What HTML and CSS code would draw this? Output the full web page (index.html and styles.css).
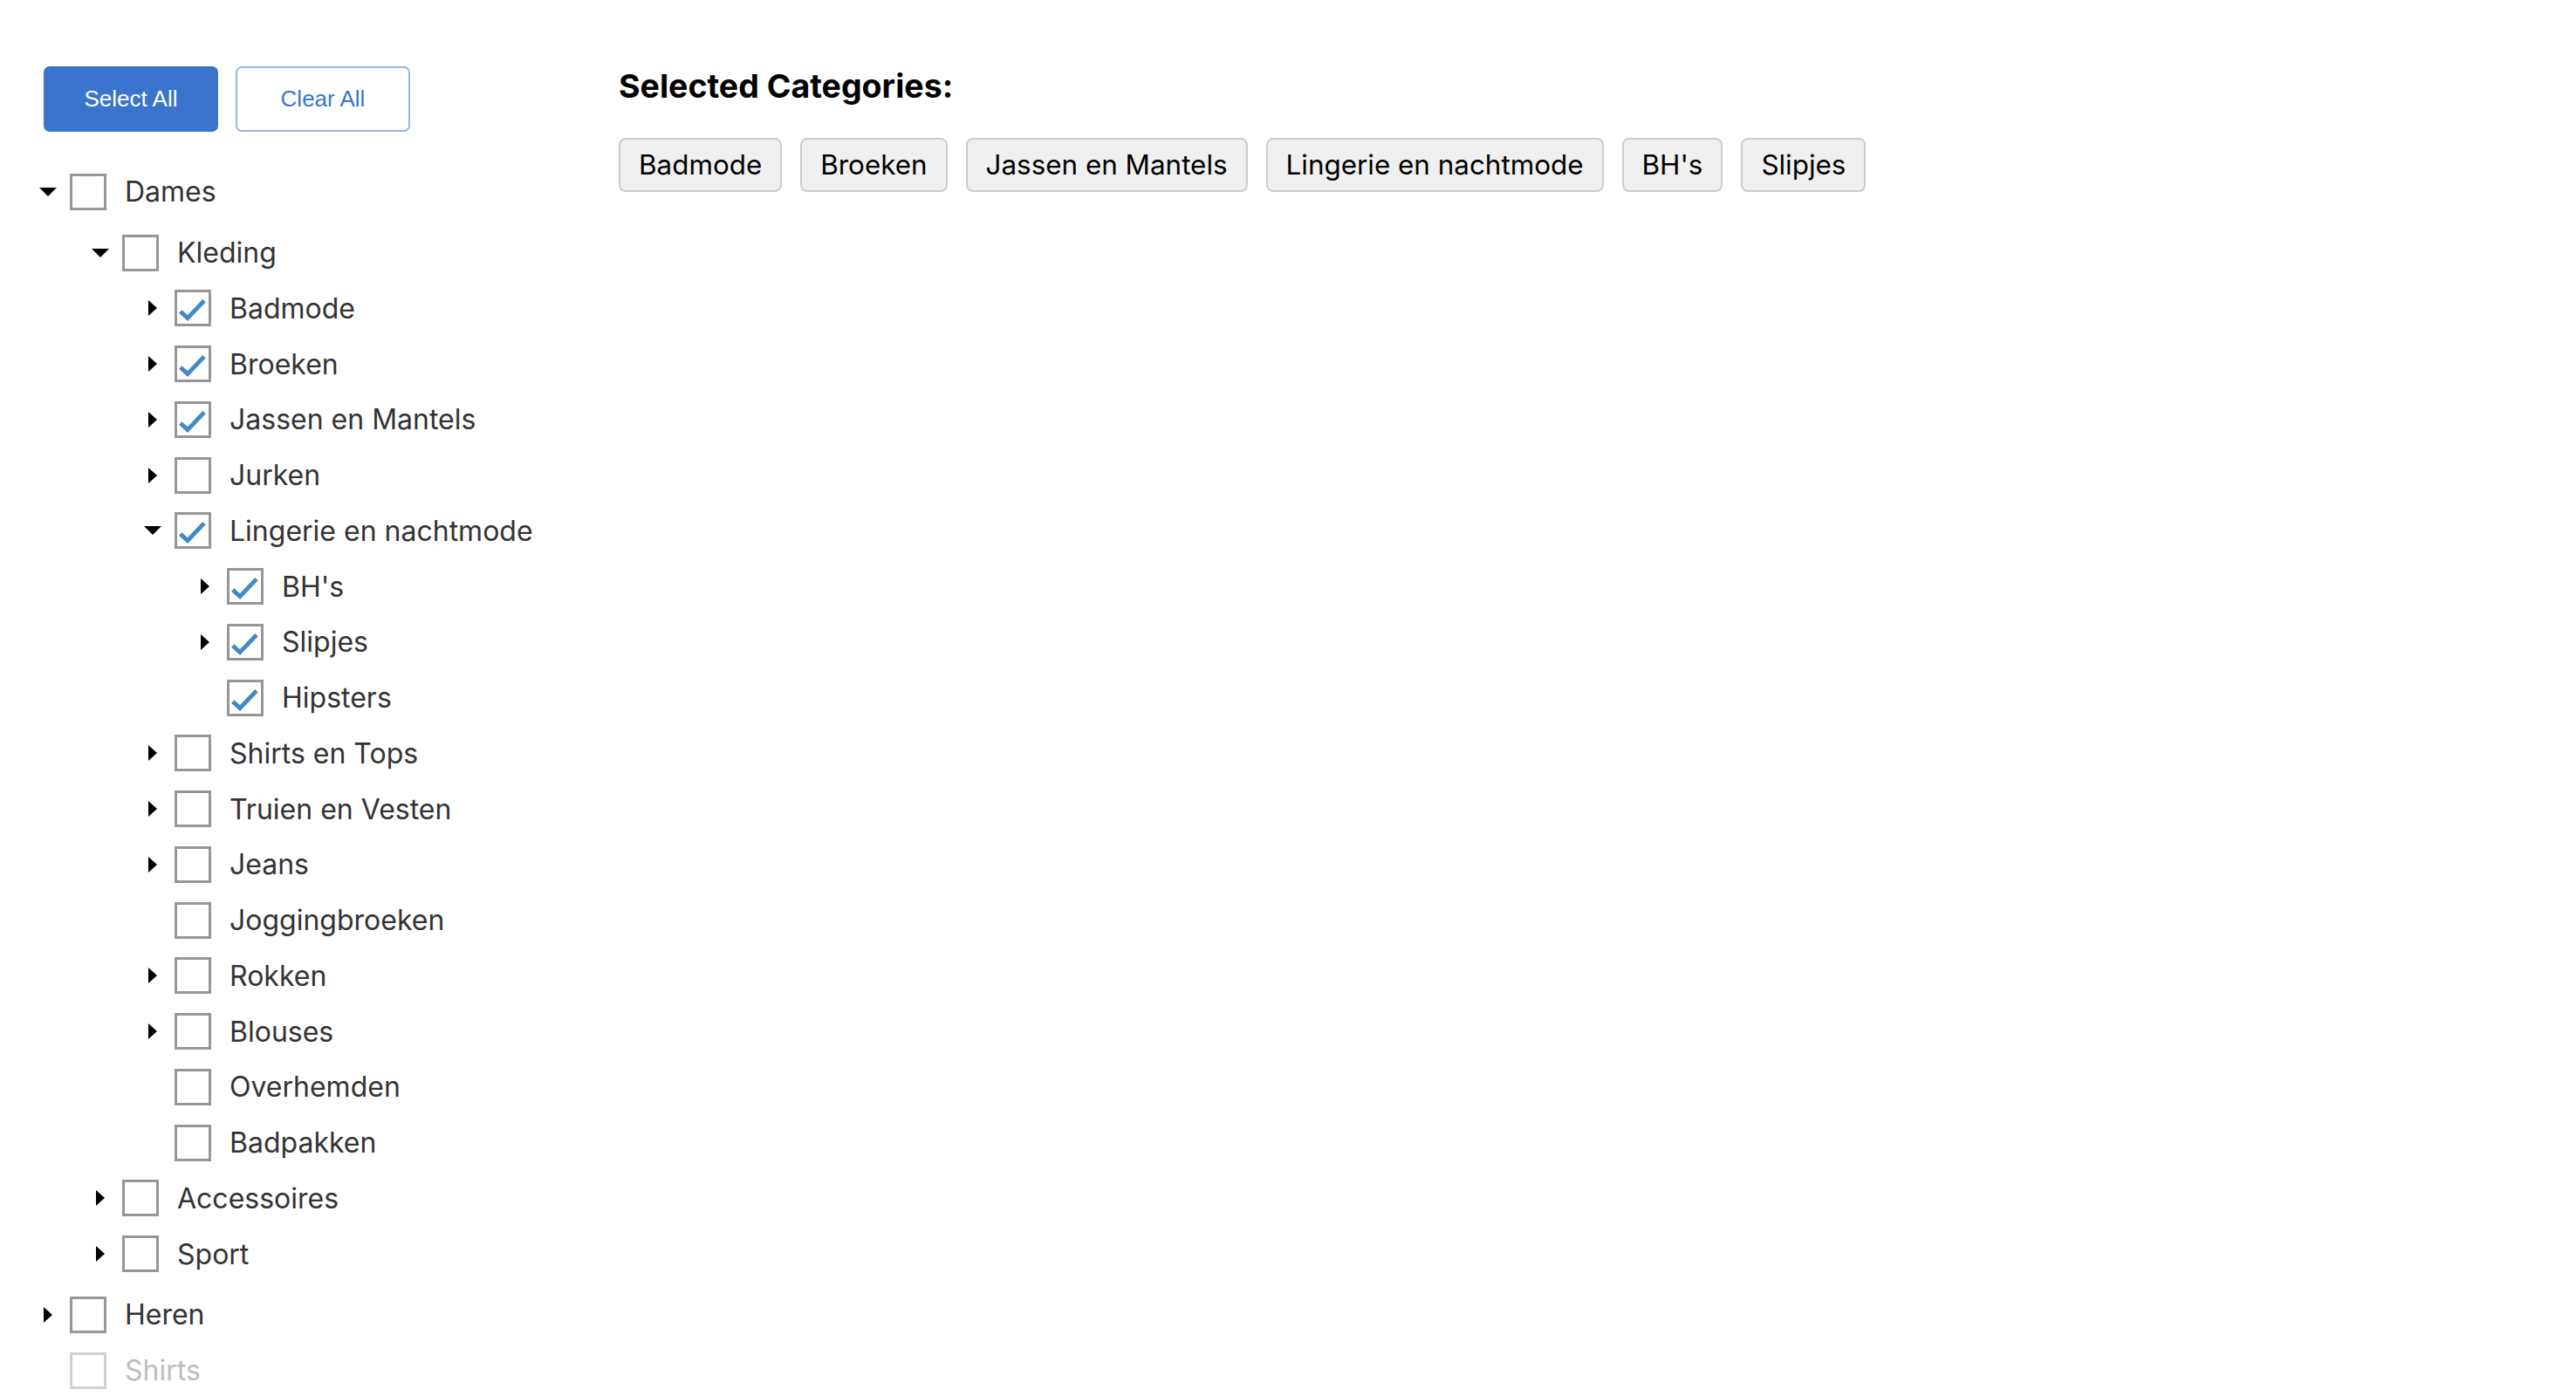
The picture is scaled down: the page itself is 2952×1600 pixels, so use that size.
FILE: index.html
```html
<!DOCTYPE html>
<html lang="nl">
<head>
<meta charset="utf-8">
<title>Categorieën</title>
<link rel="stylesheet" href="styles.css">
</head>
<body>
<div class="page">
  <div class="left">
    <div class="actions">
      <button class="btn btn-primary">Select All</button>
      <button class="btn btn-outline">Clear All</button>
    </div>
    <ul class="tree">
      <li>
        <div class="row"><span class="caret down"><svg width="20" height="10" viewBox="0 0 20 10"><polygon points="0,0 20,0 10,10"/></svg></span><span class="box"></span><span class="label">Dames</span></div>
        <ul class="sub sub-first">
          <li>
            <div class="row"><span class="caret down"><svg width="20" height="10" viewBox="0 0 20 10"><polygon points="0,0 20,0 10,10"/></svg></span><span class="box"></span><span class="label">Kleding</span></div>
            <ul class="sub">
              <li><div class="row"><span class="caret"><svg width="10" height="18" viewBox="0 0 10 18"><polygon points="0,0 10,9 0,18"/></svg></span><span class="box checked"><svg viewBox="0 0 36 36" width="36" height="36"><polyline points="3.7,22 12,29.6 31,9.6"/></svg></span><span class="label">Badmode</span></div></li>
              <li><div class="row"><span class="caret"><svg width="10" height="18" viewBox="0 0 10 18"><polygon points="0,0 10,9 0,18"/></svg></span><span class="box checked"><svg viewBox="0 0 36 36" width="36" height="36"><polyline points="3.7,22 12,29.6 31,9.6"/></svg></span><span class="label">Broeken</span></div></li>
              <li><div class="row"><span class="caret"><svg width="10" height="18" viewBox="0 0 10 18"><polygon points="0,0 10,9 0,18"/></svg></span><span class="box checked"><svg viewBox="0 0 36 36" width="36" height="36"><polyline points="3.7,22 12,29.6 31,9.6"/></svg></span><span class="label">Jassen en Mantels</span></div></li>
              <li><div class="row"><span class="caret"><svg width="10" height="18" viewBox="0 0 10 18"><polygon points="0,0 10,9 0,18"/></svg></span><span class="box"></span><span class="label">Jurken</span></div></li>
              <li>
                <div class="row"><span class="caret down"><svg width="20" height="10" viewBox="0 0 20 10"><polygon points="0,0 20,0 10,10"/></svg></span><span class="box checked"><svg viewBox="0 0 36 36" width="36" height="36"><polyline points="3.7,22 12,29.6 31,9.6"/></svg></span><span class="label">Lingerie en nachtmode</span></div>
                <ul class="sub">
                  <li><div class="row"><span class="caret"><svg width="10" height="18" viewBox="0 0 10 18"><polygon points="0,0 10,9 0,18"/></svg></span><span class="box checked"><svg viewBox="0 0 36 36" width="36" height="36"><polyline points="3.7,22 12,29.6 31,9.6"/></svg></span><span class="label">BH's</span></div></li>
                  <li><div class="row"><span class="caret"><svg width="10" height="18" viewBox="0 0 10 18"><polygon points="0,0 10,9 0,18"/></svg></span><span class="box checked"><svg viewBox="0 0 36 36" width="36" height="36"><polyline points="3.7,22 12,29.6 31,9.6"/></svg></span><span class="label">Slipjes</span></div></li>
                  <li><div class="row"><span class="caret"></span><span class="box checked"><svg viewBox="0 0 36 36" width="36" height="36"><polyline points="3.7,22 12,29.6 31,9.6"/></svg></span><span class="label">Hipsters</span></div></li>
                </ul>
              </li>
              <li><div class="row"><span class="caret"><svg width="10" height="18" viewBox="0 0 10 18"><polygon points="0,0 10,9 0,18"/></svg></span><span class="box"></span><span class="label">Shirts en Tops</span></div></li>
              <li><div class="row"><span class="caret"><svg width="10" height="18" viewBox="0 0 10 18"><polygon points="0,0 10,9 0,18"/></svg></span><span class="box"></span><span class="label">Truien en Vesten</span></div></li>
              <li><div class="row"><span class="caret"><svg width="10" height="18" viewBox="0 0 10 18"><polygon points="0,0 10,9 0,18"/></svg></span><span class="box"></span><span class="label">Jeans</span></div></li>
              <li><div class="row"><span class="caret"></span><span class="box"></span><span class="label">Joggingbroeken</span></div></li>
              <li><div class="row"><span class="caret"><svg width="10" height="18" viewBox="0 0 10 18"><polygon points="0,0 10,9 0,18"/></svg></span><span class="box"></span><span class="label">Rokken</span></div></li>
              <li><div class="row"><span class="caret"><svg width="10" height="18" viewBox="0 0 10 18"><polygon points="0,0 10,9 0,18"/></svg></span><span class="box"></span><span class="label">Blouses</span></div></li>
              <li><div class="row"><span class="caret"></span><span class="box"></span><span class="label">Overhemden</span></div></li>
              <li><div class="row"><span class="caret"></span><span class="box"></span><span class="label">Badpakken</span></div></li>
            </ul>
          </li>
          <li><div class="row"><span class="caret"><svg width="10" height="18" viewBox="0 0 10 18"><polygon points="0,0 10,9 0,18"/></svg></span><span class="box"></span><span class="label">Accessoires</span></div></li>
          <li><div class="row"><span class="caret"><svg width="10" height="18" viewBox="0 0 10 18"><polygon points="0,0 10,9 0,18"/></svg></span><span class="box"></span><span class="label">Sport</span></div></li>
        </ul>
      </li>
      <li><div class="row"><span class="caret"><svg width="10" height="18" viewBox="0 0 10 18"><polygon points="0,0 10,9 0,18"/></svg></span><span class="box"></span><span class="label">Heren</span></div></li>
      <li><div class="row disabled"><span class="caret"></span><span class="box"></span><span class="label">Shirts</span></div></li>
    </ul>
  </div>
  <div class="right">
    <h2 class="title">Selected Categories:</h2>
    <div class="chips">
      <span class="chip">Badmode</span>
      <span class="chip">Broeken</span>
      <span class="chip">Jassen en Mantels</span>
      <span class="chip">Lingerie en nachtmode</span>
      <span class="chip">BH's</span>
      <span class="chip">Slipjes</span>
    </div>
  </div>
</div>
</body>
</html>
```

FILE: styles.css
```css
html {
  overflow: hidden;
}

body {
  margin: 0;
  background: #ffffff;
  font-family: Inter, "Noto Sans", sans-serif;
}

.page {
  display: grid;
  grid-template-columns: 709px 1fr;
  align-items: start;
}

.left {
  padding: 76px 0 0 45px;
}

.actions {
  display: flex;
  gap: 20px;
  margin-left: 5px;
  margin-bottom: 37px;
}

.btn {
  box-sizing: border-box;
  width: 200px;
  height: 75px;
  border-radius: 7px;
  font-family: "Liberation Sans", Arial, sans-serif;
  font-size: 26px;
  padding: 0;
  cursor: pointer;
}

.btn-primary {
  background: #3a74cc;
  border: 2px solid #3a74cc;
  color: #ffffff;
}

.btn-outline {
  background: #ffffff;
  border: 2px solid #95b6e8;
  color: #3a74cc;
}

.tree,
.sub {
  list-style: none;
  margin: 0;
  padding: 0;
}

.sub {
  padding-left: 60px;
}

.sub-first {
  margin: 6px 0;
}

.row {
  display: flex;
  align-items: center;
  height: 63.75px;
  color: #333333;
  font-size: 32px;
}

.caret {
  width: 20px;
  margin-right: 15px;
  display: flex;
  justify-content: center;
  align-items: center;
}

.caret svg {
  display: block;
  fill: #000000;
}

.box {
  box-sizing: border-box;
  width: 42px;
  height: 42px;
  border: 3px solid #969696;
  background: #ffffff;
  margin-right: 21px;
  flex: none;
}

.box svg {
  display: block;
  fill: none;
  stroke: #4189c5;
  stroke-width: 5;
}

.label {
  white-space: nowrap;
}

.disabled {
  color: #bdbdbd;
}

.disabled .box {
  border-color: #d0d0d0;
}

.right {
  padding-top: 76px;
}

.title {
  margin: 0 0 37px;
  font-size: 37.5px;
  font-weight: 700;
  line-height: normal;
  color: #000000;
}

.chips {
  display: flex;
  flex-wrap: wrap;
  gap: 21px;
}

.chip {
  box-sizing: border-box;
  height: 62px;
  display: inline-flex;
  align-items: center;
  padding: 0 21px;
  border: 2px solid #cccccc;
  border-radius: 8px;
  background: #f0f0f0;
  color: #000000;
  font-size: 31.4px;
}
```
